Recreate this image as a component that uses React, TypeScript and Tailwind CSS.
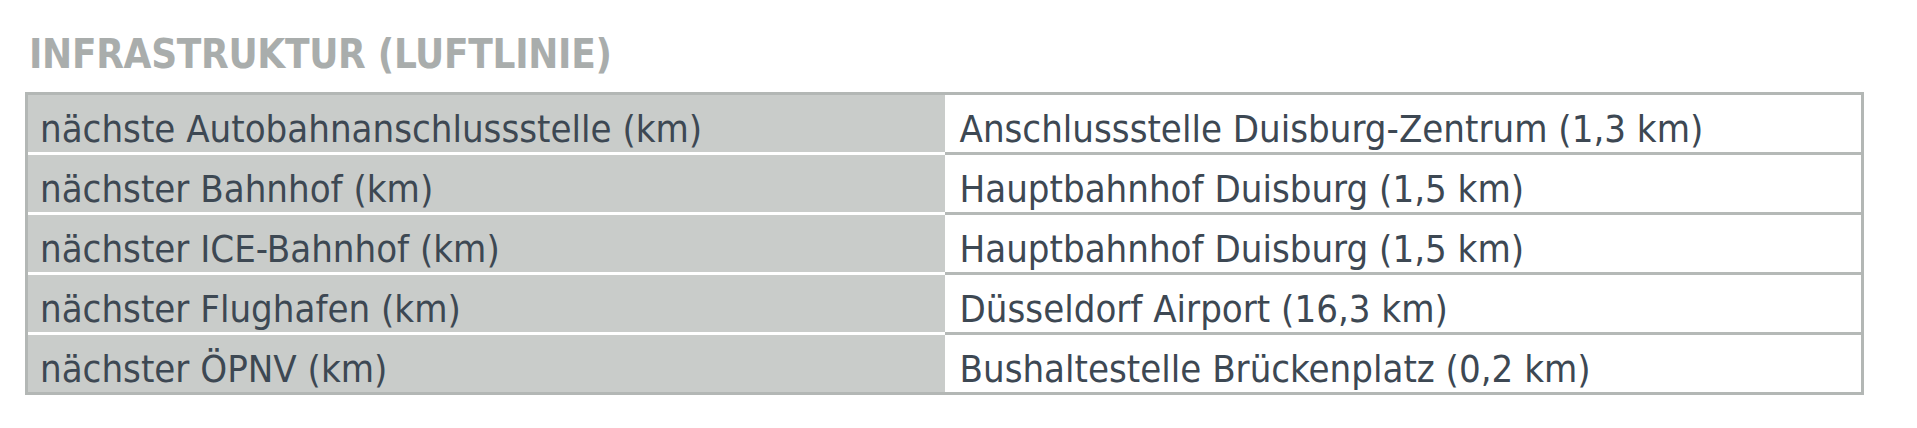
const rows = [
  ["nächste Autobahnanschlussstelle (km)", "Anschlussstelle Duisburg-Zentrum (1,3 km)"],
  ["nächster Bahnhof (km)", "Hauptbahnhof Duisburg (1,5 km)"],
  ["nächster ICE-Bahnhof (km)", "Hauptbahnhof Duisburg (1,5 km)"],
  ["nächster Flughafen (km)", "Düsseldorf Airport (16,3 km)"],
  ["nächster ÖPNV (km)", "Bushaltestelle Brückenplatz (0,2 km)"],
];

export default function App() {
  return (
    <div className="w-[1917px] h-[428px] bg-white pl-[25px] pt-[30px] font-['DejaVu_Sans_Condensed','DejaVu_Sans',sans-serif] font-stretch-condensed">
      <h2 className="h-[62px] pl-[4px] text-[40px] leading-[48px] font-bold text-[#a9adac] tracking-[-0.3px] whitespace-nowrap">
        INFRASTRUKTUR (LUFTLINIE)
      </h2>

      <div className="w-[1839px] border-[3px] border-[#b3b7b5] bg-white">
        {rows.map(([label, value], i) => (
          <div key={label} className="grid grid-cols-2">
            <div
              className={`bg-[#c9ccca] pl-[12px] pt-[12px] text-[38px] leading-[45px] text-[#3d4853] whitespace-nowrap ${i > 0 ? "h-[60px] border-t-[3px] border-white" : "h-[57px]"}`}
            >
              {label}
            </div>
            <div
              className={`pl-[15px] pt-[12px] text-[38px] leading-[45px] text-[#3d4853] whitespace-nowrap ${i > 0 ? "h-[60px] border-t-[3px] border-[#b5b9b7]" : "h-[57px]"}`}
            >
              {value}
            </div>
          </div>
        ))}
      </div>
    </div>
  );
}
